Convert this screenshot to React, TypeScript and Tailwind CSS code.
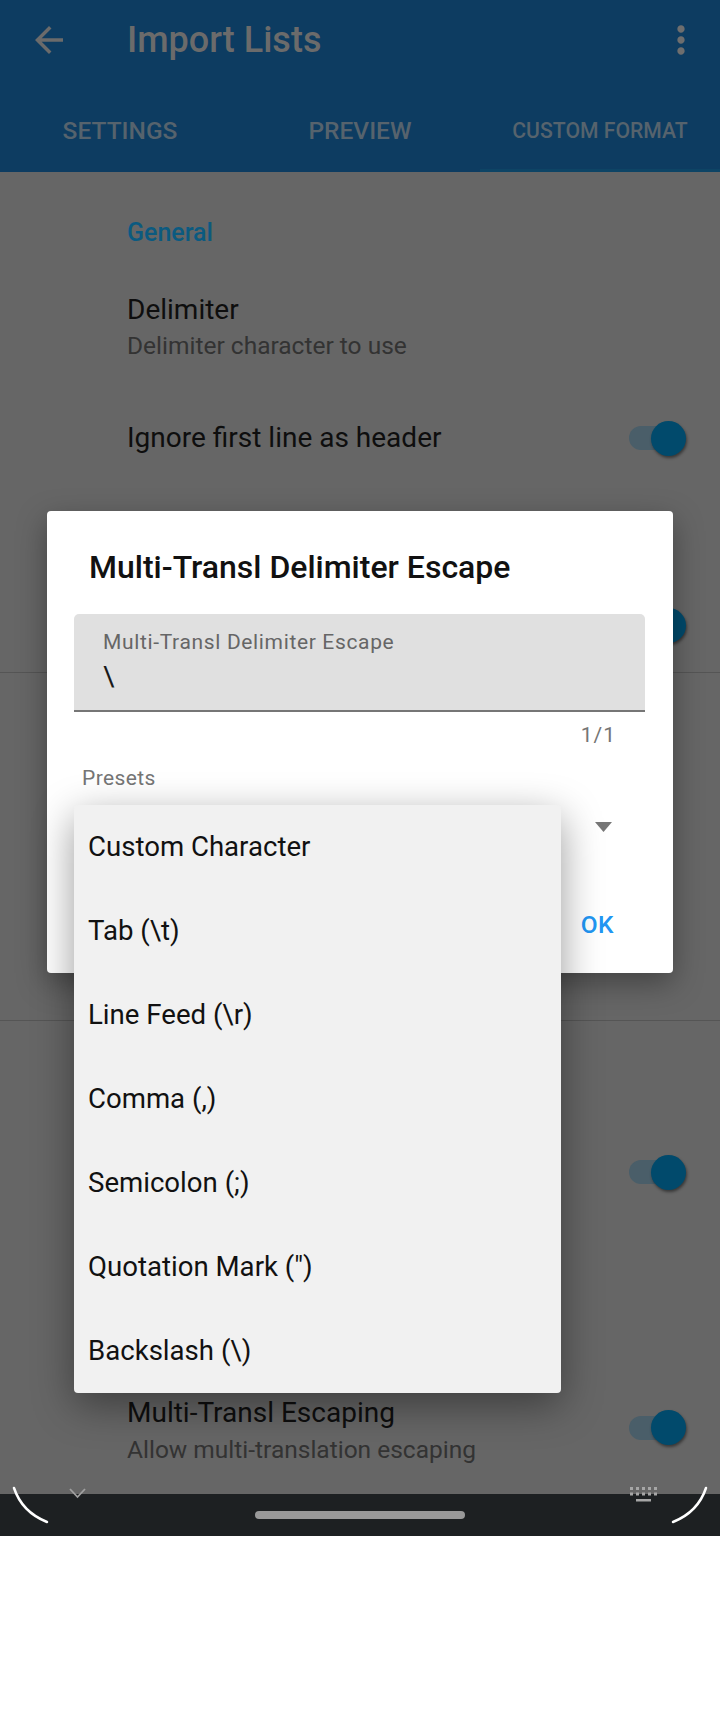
import React from "react";

const font = { fontFamily: "Roboto, 'Noto Sans', sans-serif" };

function Toggle() {
  return (
    <div className="relative w-[57px] h-[35px] shrink-0">
      <div className="absolute left-0 top-[5.5px] w-[51px] h-[24px] rounded-full bg-[#4a5e69]" />
      <div className="absolute right-0 top-0 size-[35px] rounded-full bg-[#014a6c] shadow-[1px_2px_3px_rgba(0,0,0,0.45)]" />
    </div>
  );
}

// rows that sit entirely under the dialog / menu: only their switches show
function HiddenRow({ className, toggle }: { className: string; toggle?: boolean }) {
  return (
    <div className={"flex items-center justify-end pr-[34px] " + className}>
      {toggle && <Toggle />}
    </div>
  );
}

const presets = [
  "Custom Character",
  "Tab (\\t)",
  "Line Feed (\\r)",
  "Comma (,)",
  "Semicolon (;)",
  'Quotation Mark (")',
  "Backslash (\\)",
];

export default function App() {
  return (
    <div className="relative w-[720px] h-[1712px] bg-white overflow-hidden" style={font}>
      <div className="flex flex-col h-[1536px]">
        {/* app bar */}
        <div className="bg-[#0d3c61] shrink-0">
          <div className="h-[88px] flex items-center pb-[8px]">
            <svg viewBox="0 0 24 24" className="ml-[28px] size-[42px]" fill="#6b6b6b">
              <path d="M20 11H7.83l5.59-5.59L12 4l-8 8 8 8 1.41-1.41L7.83 13H20v-2z" />
            </svg>
            <h1 className="ml-[57px] text-[36px] leading-none font-medium text-[#6b6b6b]">Import Lists</h1>
            <svg viewBox="0 0 24 24" className="ml-auto mr-[17px] size-[44px]" fill="#6e6e6e">
              <path d="M12 8c1.1 0 2-.9 2-2s-.9-2-2-2-2 .9-2 2 .9 2 2 2zm0 2c-1.1 0-2 .9-2 2s.9 2 2 2 2-.9 2-2-.9-2-2-2zm0 6c-1.1 0-2 .9-2 2s.9 2 2 2 2-.9 2-2-.9-2-2-2z" />
            </svg>
          </div>
          <div className="h-[84px] flex">
            {["SETTINGS", "PREVIEW", "CUSTOM FORMAT"].map((t, i) => (
              <div key={t} className="flex-1 flex flex-col">
                <div
                  className={
                    "flex-1 flex items-center justify-center pt-[5px] leading-none font-medium text-[#56636d] " +
                    (i === 2 ? "text-[21.2px]" : "text-[24.5px]")
                  }
                >
                  {t}
                </div>
                <div className={i === 2 ? "h-[3px] bg-[#0d4465]" : "h-[3px]"} />
              </div>
            ))}
          </div>
        </div>

        {/* settings list */}
        <div className="flex-1 bg-[#666666] flex flex-col">
          <div className="h-[100px] pt-[48px] pl-[127px]">
            <p className="text-[25px] leading-[25px] font-medium text-[#0b5a80]">General</p>
          </div>
          <div className="h-[118px] pt-[24px] pl-[127px] flex flex-col gap-[10px]">
            <p className="text-[28px] leading-[28px] text-[#0e0e0e]">Delimiter</p>
            <p className="text-[24.5px] leading-[24px] text-[#333333]">Delimiter character to use</p>
          </div>
          <div className="h-[96px] flex items-center pl-[127px] pr-[34px]">
            <p className="flex-1 text-[28px] leading-[28px] text-[#0e0e0e]">Ignore first line as header</p>
            <Toggle />
          </div>
          <HiddenRow className="h-[92px]" />
          <HiddenRow className="h-[94px]" toggle />
          <div className="h-px bg-[#555555]" />
          <HiddenRow className="h-[347px]" />
          <div className="h-px bg-[#555555]" />
          <HiddenRow className="h-[89px]" />
          <HiddenRow className="h-[124px]" toggle />
          <HiddenRow className="h-[136px]" />
          <div className="h-[124px] pl-[127px] pr-[34px] flex">
            <div className="flex-1 pt-[29px] flex flex-col gap-[11px]">
              <p className="text-[28px] leading-[28px] text-[#0e0e0e]">Multi-Transl Escaping</p>
              <p className="text-[24.5px] leading-[24px] text-[#333333]">Allow multi-translation escaping</p>
            </div>
            <div className="pt-[40px]">
              <Toggle />
            </div>
          </div>
        </div>

        {/* nav bar */}
        <div className="relative h-[42px] shrink-0 bg-[#1d2022] flex items-center justify-center">
          <div className="w-[210px] h-[8px] rounded-full bg-[#999999]" />
          <svg className="absolute left-0 top-[-8px] w-[720px] h-[40px]" viewBox="0 1486 720 40" fill="none">
            <path d="M14 1488 Q22 1512 47 1522" stroke="#ffffff" strokeWidth="2.5" strokeLinecap="round" />
            <path d="M706 1488 Q698 1512 673 1522" stroke="#ffffff" strokeWidth="2.5" strokeLinecap="round" />
            <path d="M70 1489 L77.5 1497 L85 1489" stroke="#a0a0a0" strokeWidth="1.8" />
            <g fill="#a6a6a6">
              {[0, 1, 2, 3, 4].map((i) => (
                <rect key={"a" + i} x={630 + i * 6} y={1487} width={3} height={3} />
              ))}
              {[0, 1, 2, 3, 4].map((i) => (
                <rect key={"b" + i} x={630 + i * 6} y={1492.5} width={3} height={3} />
              ))}
              <rect x={636} y={1499} width={15} height={2.5} />
            </g>
          </svg>
        </div>
      </div>

      {/* dialog */}
      <div className="absolute left-[47px] top-[511px] w-[626px] h-[462px] bg-white rounded-[4px] shadow-[0_10px_30px_rgba(0,0,0,0.35)] flex flex-col">
        <h2 className="pl-[42px] pt-[39.5px] text-[32px] leading-none font-medium text-[#111111]">
          Multi-Transl Delimiter Escape
        </h2>
        <div className="ml-[27px] mt-[31.5px] w-[571px] h-[98px] bg-[#e0e0e0] rounded-t-[5px] border-b-2 border-[#767676] pl-[29px] pt-[18px]">
          <p className="text-[21px] leading-none text-[#666666] tracking-[0.65px]">Multi-Transl Delimiter Escape</p>
          <p className="mt-[9.5px] text-[28px] leading-none text-[#1a1a1a]">\</p>
        </div>
        <p className="mt-[12.5px] self-end pr-[57px] text-[21px] leading-none text-[#757575] tracking-[1px]">1/1</p>
        <p className="mt-[22px] pl-[35px] text-[21px] leading-none text-[#757575] tracking-[0.4px]">Presets</p>
        <div className="mt-[33.5px] self-end pr-[61px]">
          <svg width="17" height="10" viewBox="0 0 17 10">
            <path d="M0 0 L17 0 L8.5 10 Z" fill="#777777" />
          </svg>
        </div>
        <p className="mt-[80.75px] self-end pr-[59px] text-[24.5px] leading-none font-medium text-[#2196f3] tracking-[0.5px]">
          OK
        </p>
      </div>

      {/* dropdown menu */}
      <div className="absolute left-[74px] top-[805px] w-[487px] h-[588px] bg-[#f1f1f1] rounded-[4px] shadow-[0_12px_40px_rgba(0,0,0,0.4)] flex flex-col">
        {presets.map((p) => (
          <div key={p} className="h-[84px] flex items-center pl-[14px] text-[27.6px] leading-none text-[#111111]">
            {p}
          </div>
        ))}
      </div>
    </div>
  );
}
